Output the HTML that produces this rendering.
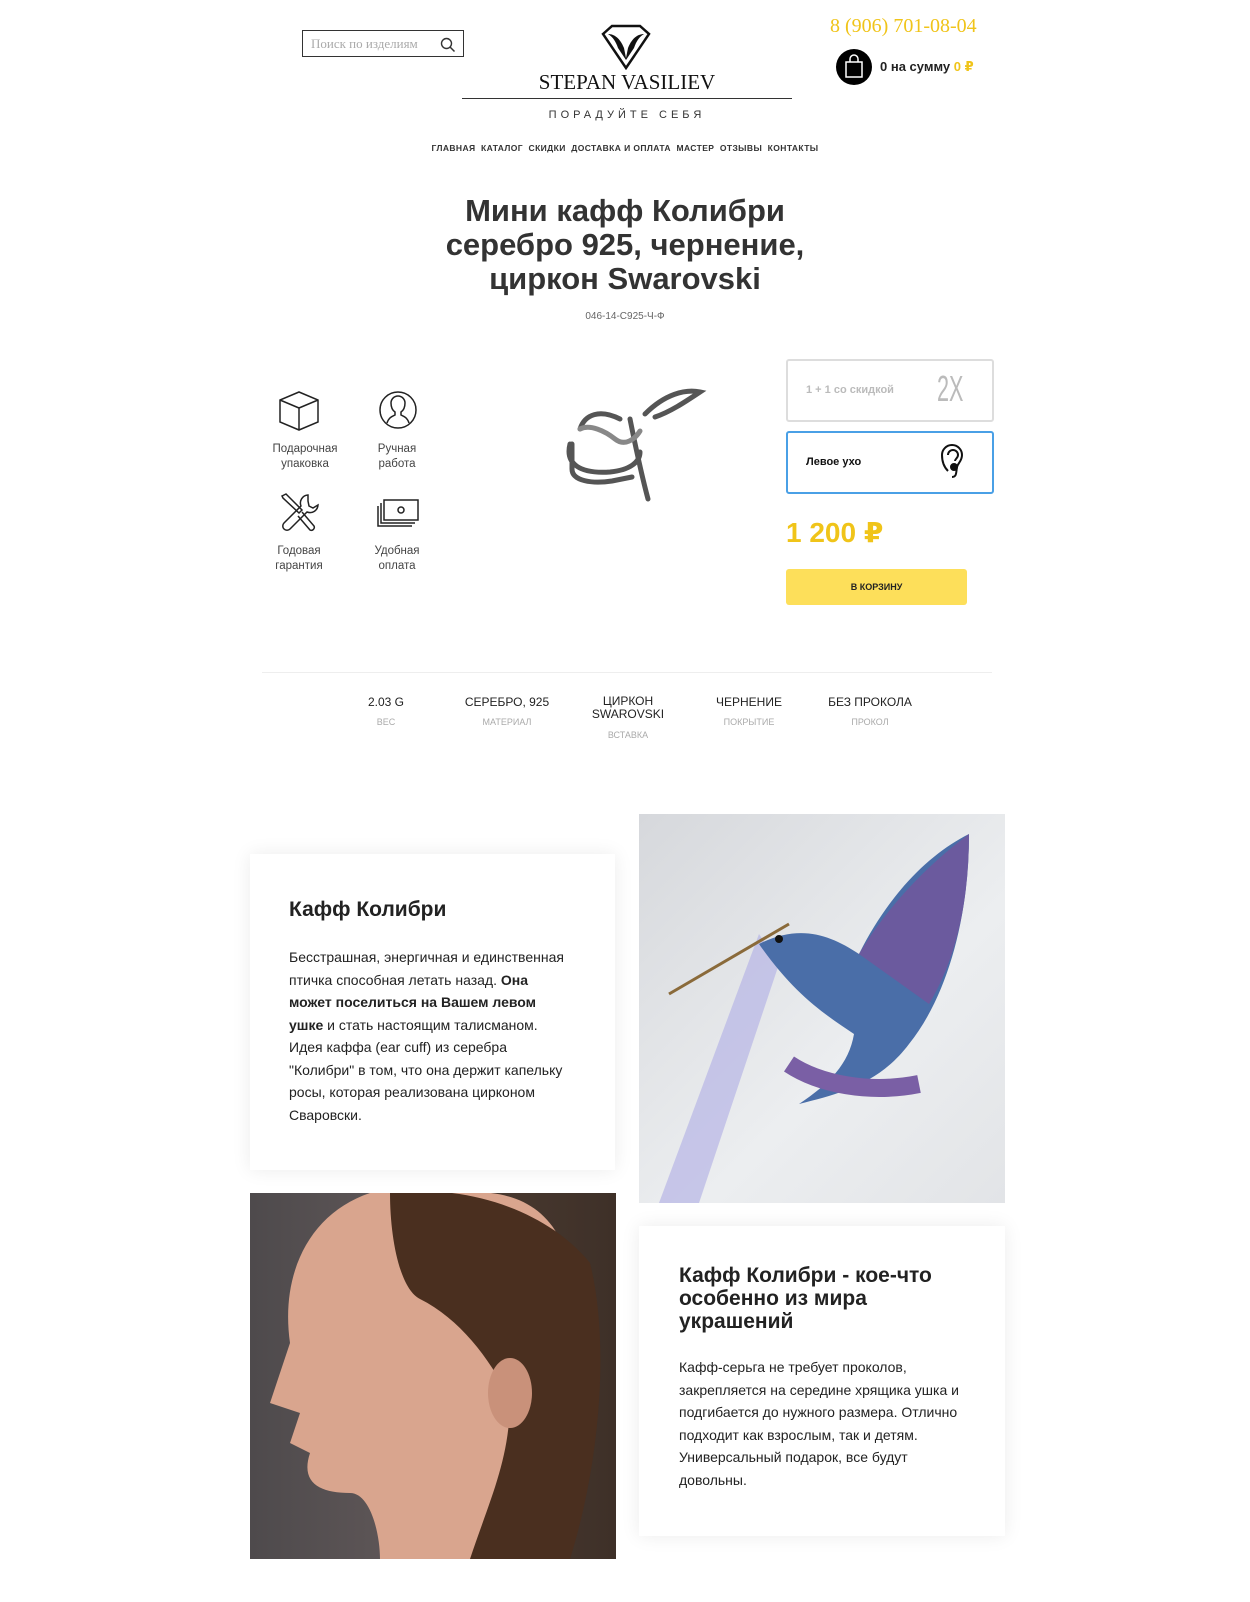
<!DOCTYPE html>
<html><head><meta charset="utf-8"><style>
*{margin:0;padding:0;box-sizing:border-box}
body{width:1250px;height:1602px;background:#fff;font-family:"Liberation Sans","DejaVu Sans",sans-serif;color:#333;position:relative;overflow:hidden}
.a{position:absolute}
.c{text-align:center}
.feat{font-size:11.5px;color:#444;line-height:15px;text-align:center;width:90px}
.spec{width:110px;text-align:center;font-size:12px;color:#222}
.spec small{display:block;font-size:9px;color:#aaa;margin-top:8px}
.card{background:#fff;box-shadow:0 0 18px rgba(0,0,0,.08)}
p{font-size:14px;line-height:22.5px;color:#222}
</style></head><body>
<div class="a" style="left:302px;top:30px;width:162px;height:27px;border:1px solid #333;font-family:'Liberation Serif',serif;font-size:13px;color:#aaa;padding:5px 8px">Поиск по изделиям</div>
<svg class="a" style="left:440px;top:37px" width="16" height="16"><circle cx="6.5" cy="6.5" r="5" fill="none" stroke="#333" stroke-width="1.4"/><path d="M10 10l4.5 4.5" stroke="#333" stroke-width="1.5"/></svg>
<svg class="a" style="left:600px;top:24px" width="52" height="46"><path d="M3 10L12 2H40L49 10L26 44Z" fill="none" stroke="#111" stroke-width="2.5"/><path d="M8 10c6 0 12 4 16 14l2 10 2-10c4-10 10-14 16-14-5 3-8 8-10 14l-8 12-8-12c-2-6-5-11-10-14z" fill="#111"/></svg>
<div class="a c" style="left:462px;top:70px;width:330px;font-family:'Liberation Serif',serif;font-size:21px;color:#111">STEPAN VASILIEV</div>
<div class="a" style="left:462px;top:98px;width:330px;height:1px;background:#333"></div>
<div class="a c" style="left:462px;top:109px;width:330px;font-size:11px;letter-spacing:4px;color:#333">ПОРАДУЙТЕ СЕБЯ</div>
<div class="a c" style="left:380px;top:143px;width:490px;font-size:8.5px;font-weight:bold;letter-spacing:.4px;color:#333">ГЛАВНАЯ&nbsp; КАТАЛОГ&nbsp; СКИДКИ&nbsp; ДОСТАВКА И ОПЛАТА&nbsp; МАСТЕР&nbsp; ОТЗЫВЫ&nbsp; КОНТАКТЫ</div>
<div class="a" style="left:830px;top:15px;font-family:'Liberation Serif',serif;font-size:20px;color:#f0c419">8 (906) 701-08-04</div>
<div class="a" style="left:836px;top:49px;width:36px;height:36px;border-radius:50%;background:#000"></div>
<svg class="a" style="left:843px;top:54px" width="22" height="26"><rect x="3" y="8" width="16" height="15" fill="none" stroke="#fff" stroke-width="1.5"/><path d="M7 8V5a4 4 0 018 0v3" fill="none" stroke="#fff" stroke-width="1.5"/></svg>
<div class="a" style="left:880px;top:59px;font-size:13px;font-weight:bold;color:#222">0 на сумму <span style="color:#f0c419">0 ₽</span></div>

<div class="a c" style="left:420px;top:194px;width:410px;font-size:31px;font-weight:bold;line-height:34px;color:#333">Мини кафф Колибри серебро 925, чернение, циркон Swarovski</div>
<div class="a c" style="left:540px;top:311px;width:170px;font-size:10px;color:#666">046-14-С925-Ч-Ф</div>

<svg class="a" style="left:278px;top:390px" width="42" height="42" fill="none" stroke="#222" stroke-width="1.5"><path d="M21 2L40 10V32L21 40L2 32V10Z M2 10L21 18L40 10 M21 18V40"/></svg>
<svg class="a" style="left:378px;top:390px" width="40" height="40" fill="none" stroke="#222" stroke-width="1.5"><circle cx="20" cy="20" r="18"/><path d="M9 33c2-6 6-7 8-8v-3c-3-2-4-5-4-9a7 7 0 0114 0c0 4-1 7-4 9v3c2 1 6 2 8 8"/></svg>
<div class="a feat" style="left:260px;top:442px">Подарочная<br>упаковка</div>
<div class="a feat" style="left:352px;top:442px">Ручная<br>работа</div>
<svg class="a" style="left:278px;top:492px" width="42" height="42" fill="none" stroke="#222" stroke-width="1.5"><path d="M4 4l4-2 16 16-3 3L5 6z M24 20l12 14a3 3 0 01-4 4L20 24"/><path d="M30 3a8 8 0 00-7 11L6 31a4 4 0 006 6L29 20a8 8 0 0011-7l-5 3-4-2-1-5z"/></svg>
<svg class="a" style="left:376px;top:498px" width="44" height="32" fill="none" stroke="#222" stroke-width="1.5"><rect x="8" y="2" width="34" height="20"/><path d="M5 5v20h34 M2 8v20h34"/><circle cx="25" cy="12" r="3"/></svg>
<div class="a feat" style="left:254px;top:544px">Годовая<br>гарантия</div>
<div class="a feat" style="left:352px;top:544px">Удобная<br>оплата</div>

<svg class="a" style="left:560px;top:384px" width="150" height="140" fill="none" stroke="#555" stroke-width="5" stroke-linecap="round"><path d="M20 45c5-15 20-20 40-10 M10 60c-5 20 10 30 40 28 20-2 30-10 30-20 M12 60v25c0 12 20 15 40 12l20-4 M85 30c20-20 40-25 55-22-15 10-30 20-45 25 M70 35c5 25 10 50 18 80"/><path d="M20 45c10-5 25 2 35 10 10 8 20 0 25-8" stroke="#888"/></svg>

<div class="a" style="left:786px;top:359px;width:208px;height:63px;border:2px solid #ddd;border-radius:3px"></div>
<div class="a" style="left:806px;top:384px;font-size:11px;font-weight:bold;color:#bbb">1 + 1 со скидкой</div>
<div class="a" style="left:937px;top:368px;font-size:36px;color:#bbb;font-weight:100;transform:scaleX(.6);transform-origin:left">2X</div>
<div class="a" style="left:786px;top:431px;width:208px;height:63px;border:2px solid #4aa0e6;border-radius:3px"></div>
<div class="a" style="left:806px;top:456px;font-size:11px;font-weight:bold;color:#111">Левое ухо</div>
<svg class="a" style="left:940px;top:441px" width="26" height="38" fill="none" stroke="#111" stroke-width="2"><path d="M8 30c-4-4-6-10-6-16a10 10 0 0120 0c0 6-4 8-5 12-1 5 0 10-5 10M8 14a5 5 0 0110 0c0 3-3 4-3 6"/><circle cx="14" cy="26" r="3" fill="#111"/></svg>
<div class="a" style="left:786px;top:516px;font-size:28px;font-weight:bold;color:#f0c419">1 200 ₽</div>
<div class="a c" style="left:786px;top:569px;width:181px;height:36px;background:#fddf5a;border-radius:3px;font-size:9px;font-weight:bold;line-height:36px;color:#222">В КОРЗИНУ</div>

<div class="a" style="left:262px;top:672px;width:730px;height:1px;background:#eee"></div>
<div class="a spec" style="left:331px;top:695px">2.03 G<small>ВЕС</small></div>
<div class="a spec" style="left:452px;top:695px">СЕРЕБРО, 925<small>МАТЕРИАЛ</small></div>
<div class="a spec" style="left:573px;top:695px;line-height:13px">ЦИРКОН<br>SWAROVSKI<small>ВСТАВКА</small></div>
<div class="a spec" style="left:694px;top:695px">ЧЕРНЕНИЕ<small>ПОКРЫТИЕ</small></div>
<div class="a spec" style="left:815px;top:695px">БЕЗ ПРОКОЛА<small>ПРОКОЛ</small></div>

<div class="a card" style="left:250px;top:854px;width:365px;height:316px"></div>
<div class="a" style="left:289px;top:898px;font-size:21px;font-weight:bold;color:#222">Кафф Колибри</div>
<p class="a" style="left:289px;top:946px;width:282px">Бесстрашная, энергичная и единственная птичка способная летать назад. <b>Она может поселиться на Вашем левом ушке</b> и стать настоящим талисманом. Идея каффа (ear cuff) из серебра "Колибри" в том, что она держит капельку росы, которая реализована цирконом Сваровски.</p>

<div class="a" style="left:639px;top:814px;width:366px;height:389px;background:linear-gradient(135deg,#d6d8dc,#eceef0 60%,#e2e4e7)"></div>
<svg class="a" style="left:639px;top:814px" width="366" height="389"><path d="M120 120L20 389h40L140 150z" fill="#b6b5e6" opacity=".7"/><path d="M150 110L30 180" stroke="#8a6a3a" stroke-width="3"/><path d="M120 130c40-20 70-10 100 10 30-60 70-100 110-120 0 80-20 160-60 210-30 40-70 50-110 60 30-20 50-40 55-70-30-20-60-40-95-90z" fill="#4a6ea8"/><path d="M220 140c30-50 70-90 110-120 0 60-10 120-40 170z" fill="#6b5a9e"/><path d="M150 250c30 20 80 30 130 20" stroke="#7a5fa5" stroke-width="18" fill="none"/><circle cx="140" cy="125" r="4" fill="#111"/></svg>

<div class="a" style="left:250px;top:1193px;width:366px;height:366px;background:linear-gradient(90deg,#4e4a4c,#5e5657 40%,#4a3a30 60%,#3e3028)"></div>
<svg class="a" style="left:250px;top:1193px" width="366" height="366"><path d="M120 0C60 20 30 80 40 150l-20 60 30 10-10 30 20 10c-10 30 10 40 40 40 20 0 30 40 30 66h120c0-60 30-100 60-120 20-40 10-120 0-200-20-40-60-50-100-46z" fill="#d9a58e"/><path d="M140 0c80-10 160 20 200 70 20 80 10 200-20 296H220c20-60 40-100 40-160-20-40-50-80-90-100-20-10-30-60-30-106z" fill="#4a2f1f"/><ellipse cx="260" cy="200" rx="22" ry="35" fill="#c9917a"/></svg>

<div class="a card" style="left:639px;top:1226px;width:366px;height:310px"></div>
<div class="a" style="left:679px;top:1264px;width:300px;font-size:21px;font-weight:bold;line-height:23px;color:#222">Кафф Колибри - кое-что особенно из мира украшений</div>
<p class="a" style="left:679px;top:1356px;width:280px">Кафф-серьга не требует проколов, закрепляется на середине хрящика ушка и подгибается до нужного размера. Отлично подходит как взрослым, так и детям. Универсальный подарок, все будут довольны.</p>
</body></html>
